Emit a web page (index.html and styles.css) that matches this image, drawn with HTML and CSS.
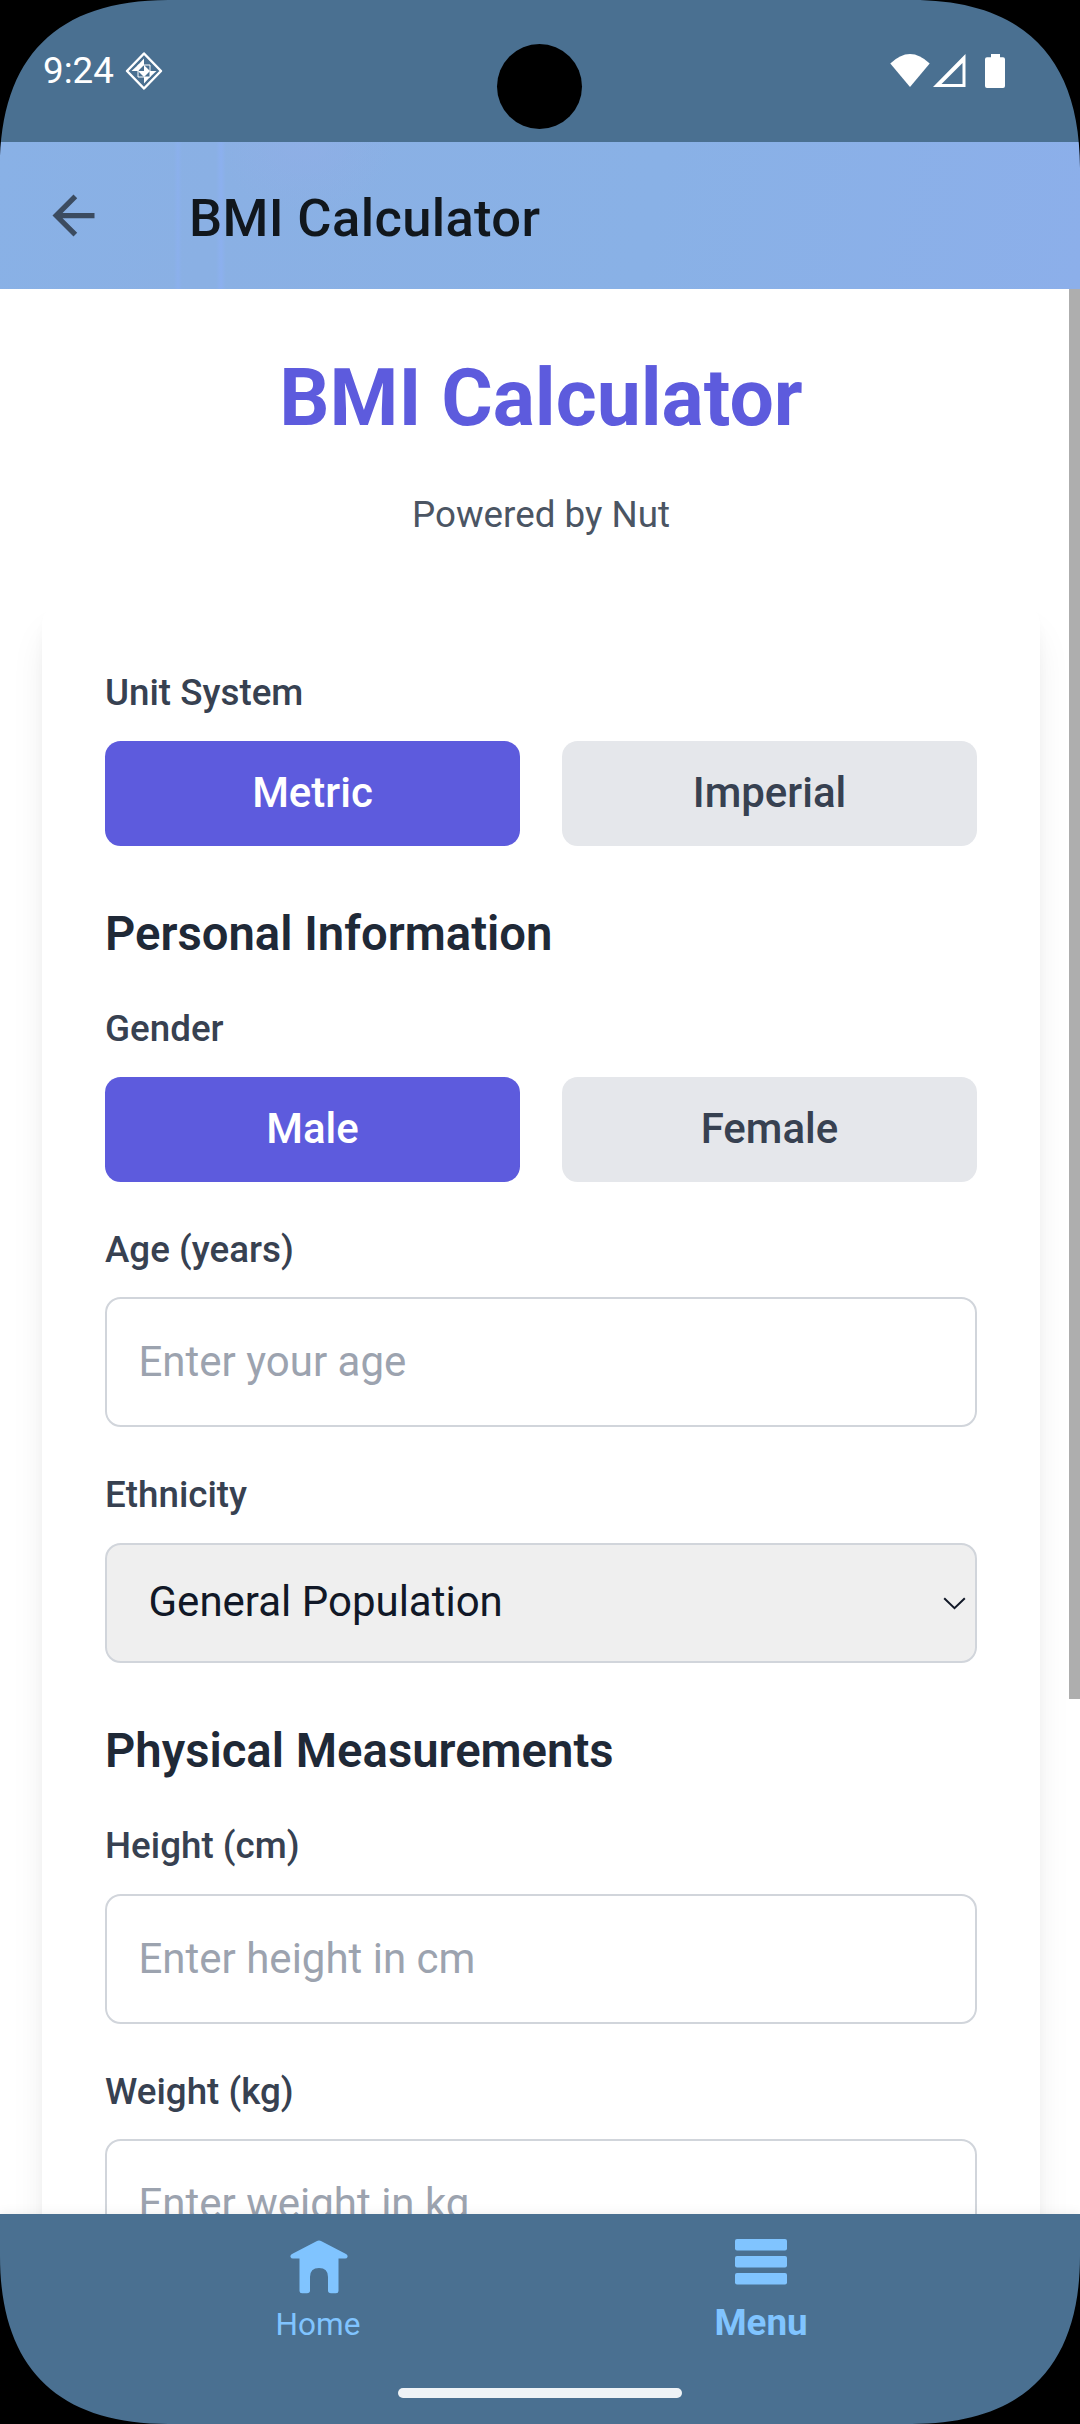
FILE: index.html
```html
<!DOCTYPE html>
<html lang="en">
<head>
<meta charset="utf-8">
<title>BMI Calculator</title>
<link rel="stylesheet" href="styles.css">
</head>
<body>
<div class="screen">
  <header class="status">
    <span class="clock">9:24</span>
    <svg class="badge" width="38" height="40" viewBox="0 0 38 40">
      <path d="M19 2.500 L36 20 L19 37.500 L2 20 Z" fill="none" stroke="#fff" stroke-width="2.500" stroke-linejoin="round"/>
      <path fill="#fff" d="M19 7.500V14H13ZM31.500 20H25V26ZM19 32.500V26H25ZM6.500 20H13V14ZM13 14H19L13 20ZM19 14L25 20H19ZM13 20H19V26ZM19 26V20H25Z"/>
      <path fill="none" stroke="#fff" stroke-width="1" d="M13 14H25V26H13Z"/>
    </svg>
    <div class="signals">
      <svg width="40" height="34" viewBox="0 0 40 34"><path fill="#fff" d="M0.300 9.500Q20-9.500 39.700 9.500L20 33Z"/></svg>
      <svg class="cell" width="33" height="34" viewBox="0 0 33 34"><path fill="#fff" fill-rule="evenodd" d="M32.500 0V33H0ZM29.500 9L8.500 30H29.500Z"/></svg>
      <svg class="battery" width="20" height="35" viewBox="0 0 20 35"><path fill="#fff" d="M6 0h9v3.300h3q2 0 2 2V32q0 2-2 2H2q-2 0-2-2V5.300q0-2 2-2h4Z"/></svg>
    </div>
  </header>
  <div class="appbar">
    <svg width="63" height="63" viewBox="0 0 24 24"><path fill="#3b4b60" d="M20 11H7.830l5.590-5.590L12 4l-8 8 8 8 1.410-1.410L7.830 13H20v-2z"/></svg>
    <span class="appbar-title">BMI Calculator</span>
  </div>
  <main class="content">
    <h1>BMI Calculator</h1>
    <p class="tagline">Powered by Nut</p>
    <section class="card">
      <div class="label">Unit System</div>
      <div class="pair"><button class="choice active">Metric</button><button class="choice">Imperial</button></div>
      <h2>Personal Information</h2>
      <div class="label">Gender</div>
      <div class="pair"><button class="choice active">Male</button><button class="choice">Female</button></div>
      <label class="label spaced">Age (years)</label>
      <input class="field" placeholder="Enter your age">
      <label class="label spaced above-select">Ethnicity</label>
      <div class="select"><span>General Population</span>
        <svg width="23" height="13" viewBox="0 0 23 13"><path d="M1.200 1.200L11.500 11.200L21.800 1.200" fill="none" stroke="#111827" stroke-width="2"/></svg>
      </div>
      <h2>Physical Measurements</h2>
      <label class="label">Height (cm)</label>
      <input class="field" placeholder="Enter height in cm">
      <label class="label spaced">Weight (kg)</label>
      <input class="field" placeholder="Enter weight in kg">
    </section>
  </main>
  <nav class="tabs">
    <div class="tab home">
      <svg width="58" height="54" viewBox="0 0 58 54"><path fill="#80c4ff" d="M26.500 1.200Q29-.4 31.500 1.200L56 14Q58 15.300 57.500 17Q57 18.500 55 18.500H48.500V51Q48.500 53.300 46 53.300H41Q38 53.300 38 50.500V37Q38 28 29 28T20 37V50.500Q20 53.300 17 53.300H12Q9.500 53.300 9.500 51V18.500H3Q1 18.500.5 17Q0 15.300 2 14Z"/></svg>
      <span>Home</span>
    </div>
    <div class="tab menu">
      <svg width="52" height="46" viewBox="0 0 52 46" fill="#80c4ff"><rect width="52" height="11.600" rx="2"/><rect y="17" width="52" height="11.600" rx="2"/><rect y="34" width="52" height="11.400" rx="2"/></svg>
      <span>Menu</span>
    </div>
  </nav>
  <div class="scrollbar"></div>
  <div class="camera"></div>
  <div class="gesture"></div>
  <svg class="corners" width="1080" height="2424" viewBox="0 0 1080 2424">
    <path d="M0 0H168C57 0 0 57 0 168ZM1080 0H912C1023 0 1080 57 1080 168ZM0 2424H168C57 2424 0 2367 0 2256ZM1080 2424H912C1023 2424 1080 2367 1080 2256Z"/>
  </svg>
</div>
</body>
</html>
```
FILE: styles.css
```css
* { box-sizing: border-box; }
body { margin: 0; font-family: Roboto, sans-serif; }
.screen { position: relative; display: flex; flex-direction: column; width: 1080px; height: 2424px; overflow: hidden; background: #fff; }

.status { flex: none; display: flex; align-items: flex-start; height: 142px; padding: 48px 75px 0 43px; background: #4a7091; color: #fff; }
.clock { width: 82px; margin-top: 1px; font-size: 36.750px; line-height: 44px; }
.badge { margin-top: 3px; }
.signals { display: flex; margin: 6px 0 0 auto; }
.cell { margin-left: 3px; }
.battery { margin-left: 19px; }

.appbar {
  flex: none; display: flex; align-items: center; height: 147px; padding-left: 42px;
  background:
    linear-gradient(90deg, transparent 174px, rgba(140,176,240,.7) 178px, transparent 182px, transparent 216px, rgba(140,176,240,.9) 221px, transparent 226px),
    radial-gradient(ellipse 90px 70px at 305px 0, rgba(146,174,230,.6), transparent),
    linear-gradient(100deg, #89b1e6 0%, #8ab0e4 20%, #89b1e6 60%, #8cafea 100%);
}
.appbar-title { margin: 4px 0 0 84px; font-size: 52.500px; font-weight: 500; line-height: 62px; letter-spacing: .35px; color: #11171d; }

.content { flex: 1; min-height: 0; overflow: hidden; padding: 62px 40px 0 42px; }
h1 { margin: 0; font-size: 78.750px; font-weight: 700; line-height: 94px; text-align: center; color: #5d5bdd; }
.tagline { margin: 44px 0 62px; font-size: 36.750px; line-height: 52px; text-align: center; color: #4b5563; }
.card { padding: 63px; border-radius: 21px; background: #fff; box-shadow: 0 26px 39px -8px rgba(0,0,0,.1), 0 10px 16px -5px rgba(0,0,0,.05); }
.label { display: block; margin-bottom: 22px; font-size: 36.750px; font-weight: 500; line-height: 53px; color: #374151; }
.pair { display: grid; grid-template-columns: 1fr 1fr; gap: 42px; }
.choice { height: 105px; padding: 0 0 2px; border: 0; border-radius: 15.750px; background: #e5e7eb; color: #374151; font: 500 42px/63px Roboto, sans-serif; }
.choice.active { background: #5d5bdd; color: #fff; }
h2 { margin: 51px 0 31px; font-size: 47.250px; font-weight: 600; line-height: 74px; color: #1f2937; }
.spaced { margin: 41px 0 21px; }
.above-select { margin-bottom: 22px; }
.field { display: block; width: 100%; height: 130px; padding: 0 31.500px 2px; border: 2px solid #d1d5db; border-radius: 15.750px; background: #fff; font: 400 42px/63px Roboto, sans-serif; }
.field::placeholder { color: #9ca3af; opacity: 1; }
.select { display: flex; align-items: center; justify-content: space-between; height: 120px; padding: 0 9px 0 41.500px; border: 2px solid #d1d5db; border-radius: 15.750px; background: #efefef; font-size: 42px; line-height: 63px; color: #111827; }
.select span { padding-bottom: 4px; }

.tabs { position: relative; flex: none; display: flex; justify-content: center; height: 210px; background: #4a7091; color: #80c4ff; box-shadow: 0 -2px 10px rgba(0,0,0,.06); }
.tab { display: flex; flex-direction: column; align-items: center; width: 442px; padding-top: 26px; }
.tab svg { flex: none; margin-right: 1px; }
.home span { margin: 12px 2px 0 0; font-size: 31.500px; line-height: 37px; }
.menu { padding-top: 25px; }
.menu span { margin-top: 16px; font-size: 36.750px; font-weight: 700; line-height: 43px; }

.scrollbar { position: absolute; top: 289px; right: 0; width: 11px; height: 1410px; background: #aeaeae; }
.camera { position: absolute; top: 44px; left: 497px; width: 85px; height: 85px; border-radius: 50%; background: #000; }
.gesture { position: absolute; top: 2388px; left: 398px; width: 284px; height: 10px; border-radius: 5px; background: #eff3f6; }
.corners { position: absolute; inset: 0; pointer-events: none; }
```
